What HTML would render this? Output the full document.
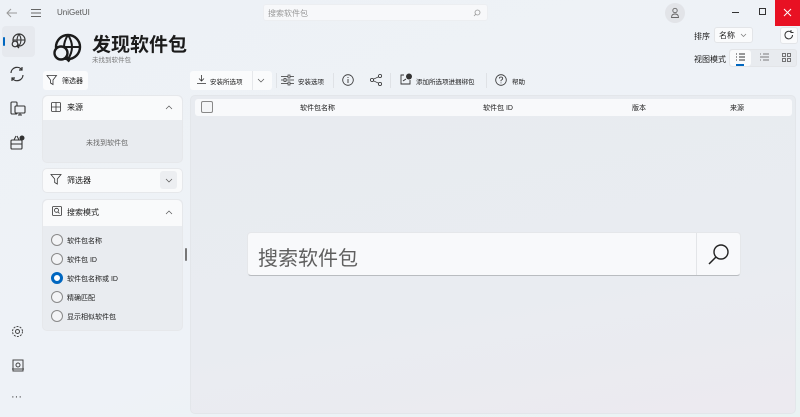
<!DOCTYPE html>
<html><head><meta charset="utf-8"><style>
*{margin:0;padding:0;box-sizing:border-box}
body{width:800px;height:417px;overflow:hidden;position:relative;font-family:"Liberation Sans","Noto Sans CJK SC",sans-serif;color:#1b1b1b;background:linear-gradient(160deg,#edf1f6 0%,#eef2f7 60%,#eaf3f3 100%)}
.a{position:absolute}
.t{font-size:8px;white-space:nowrap}
.card{position:absolute;background:#f9fafb;border:1px solid #e6e8eb;border-radius:5px}
.radio{position:absolute;left:51px;width:12px;height:12px;border:1px solid #8a8a8a;border-radius:50%;background:#f3f4f6}
svg{position:absolute;overflow:visible}
</style></head><body>
<svg style="left:6px;top:8px" width="12" height="10"><path d="M11 5H1M5 1L1 5L5 9" stroke="#999" fill="none" stroke-width="1"/></svg>
<svg style="left:31px;top:8px" width="11" height="10"><path d="M0 1.5H10M0 5H10M0 8.5H10" stroke="#666" stroke-width="1"/></svg>
<div class="a t" style="left:57px;top:8px;font-size:8px;color:#555">UniGetUI</div>
<div class="a" style="left:263px;top:4px;width:225px;height:17px;background:#f7f8fa;border-radius:3px;border:1px solid #eceef1"></div>
<div class="a t" style="left:268px;top:8px;color:#999">搜索软件包</div>
<svg style="left:473px;top:9px" width="8" height="8"><circle cx="4.5" cy="3.5" r="2.5" stroke="#999" fill="none" stroke-width=".8"/><path d="M2.8 5.2L1 7" stroke="#999" stroke-width=".8"/></svg>
<div class="a" style="left:665px;top:3px;width:20px;height:20px;border-radius:50%;background:#e2e4e8"></div>
<svg style="left:670px;top:7px" width="10" height="12"><circle cx="5" cy="3.5" r="2.2" stroke="#666" fill="none" stroke-width=".9"/><path d="M1.5 10.5Q1.5 7 5 7Q8.5 7 8.5 10.5Z" stroke="#666" fill="none" stroke-width=".9"/></svg>
<div class="a" style="left:732px;top:12px;width:7px;height:1px;background:#333"></div>
<div class="a" style="left:759px;top:8px;width:7px;height:7px;border:1px solid #333"></div>
<div class="a" style="left:775px;top:0;width:25px;height:26px;background:#e81123"></div>
<svg style="left:784px;top:9px" width="7" height="7"><path d="M0 0L7 7M7 0L0 7" stroke="#fff" stroke-width="1"/></svg>
<div class="a" style="left:2px;top:26px;width:33px;height:31px;background:#e6e9ee;border-radius:4px"></div>
<div class="a" style="left:3px;top:37px;width:2px;height:9px;background:#0067c0;border-radius:1px"></div>
<svg style="left:10px;top:33px" width="16" height="16"><circle cx="9" cy="7" r="6" stroke="#333" fill="none" stroke-width="1.2"/><path d="M3 7H15M9 1Q5 7 9 13M9 1Q13 7 9 13" stroke="#333" fill="none" stroke-width="1"/><circle cx="5" cy="11" r="2.8" fill="#e6e9ee" stroke="#333" stroke-width="1.2"/><path d="M7 13L9 15" stroke="#333" stroke-width="1.3"/></svg>
<svg style="left:9px;top:66px" width="16" height="16"><path d="M2 7A6 6 0 0 1 13 4M14 9A6 6 0 0 1 3 12M13 1V4H10M3 15V12H6" stroke="#333" fill="none" stroke-width="1.2"/></svg>
<svg style="left:10px;top:101px" width="16" height="15"><rect x="1" y="1" width="6" height="12" rx="1" stroke="#333" fill="none" stroke-width="1.1"/><rect x="5" y="5" width="10" height="7" rx="1" fill="#eef1f5" stroke="#333" stroke-width="1.1"/><path d="M8 14H12M10 12V14" stroke="#333"/></svg>
<svg style="left:9px;top:134px" width="17" height="17"><rect x="2" y="6" width="11" height="9" rx="1" stroke="#333" fill="none" stroke-width="1.1"/><path d="M5 6L7 2M10 6L8 2M2 10H13" stroke="#333" fill="none"/><circle cx="13" cy="4" r="2.5" fill="#333"/></svg>
<svg style="left:11px;top:325px" width="13" height="13"><circle cx="6.5" cy="6.5" r="2" stroke="#444" fill="none"/><circle cx="6.5" cy="6.5" r="5" stroke="#444" fill="none" stroke-dasharray="2 1.2"/></svg>
<svg style="left:12px;top:359px" width="12" height="13"><rect x="1" y="1" width="10" height="11" stroke="#444" fill="none"/><circle cx="6" cy="6" r="2" stroke="#444" fill="none"/><path d="M0 10H12" stroke="#444"/></svg>
<div class="a t" style="left:11px;top:391px;font-size:11px;color:#444">···</div>
<svg style="left:51px;top:33px" width="30" height="30"><circle cx="17" cy="14" r="12" stroke="#1b1b1b" fill="none" stroke-width="2.4"/><path d="M5 14H29M17 2Q9 14 17 26M17 2Q25 14 17 26" stroke="#1b1b1b" fill="none" stroke-width="2"/><circle cx="10" cy="20" r="6.5" fill="#eef2f6" stroke="#1b1b1b" stroke-width="2.4"/><path d="M14.5 24.5L18.5 28.5" stroke="#1b1b1b" stroke-width="2.6"/></svg>
<div class="a" style="left:92px;top:30px;font-size:19px;font-weight:bold;white-space:nowrap">发现软件包</div>
<div class="a t" style="left:92px;top:54px;font-size:6.5px;color:#777">未找到软件包</div>
<div class="a t" style="left:694px;top:31px">排序</div>
<div class="a" style="left:714px;top:27px;width:39px;height:16px;background:#fafbfc;border:1px solid #e3e5e8;border-radius:3px"></div>
<div class="a t" style="left:719px;top:30px">名称</div>
<svg style="left:741px;top:34px" width="5" height="3"><path d="M0 0L2.5 2.5L5 0" stroke="#777" fill="none" stroke-width=".7"/></svg>
<div class="a" style="left:780px;top:27px;width:18px;height:17px;background:#fafbfc;border:1px solid #e3e5e8;border-radius:3px"></div>
<svg style="left:784px;top:30px" width="10" height="10"><path d="M8.5 5A3.8 3.8 0 1 1 7 2M7 0V2.5H9.5" stroke="#333" fill="none"/></svg>
<div class="a t" style="left:694px;top:54px">视图模式</div>
<div class="a" style="left:729px;top:49px;width:68px;height:18px;background:#e8ebef;border:1px solid #e3e5e8;border-radius:3px"></div>
<div class="a" style="left:730px;top:50px;width:21px;height:16px;background:#fafbfc;border-radius:3px"></div>
<div class="a" style="left:736px;top:64px;width:8px;height:2px;background:#0067c0"></div>
<svg style="left:736px;top:53px" width="9" height="8"><path d="M0 1H1M3 1H9M0 4H1M3 4H9M0 7H1M3 7H9" stroke="#333"/></svg>
<svg style="left:760px;top:53px" width="9" height="8"><path d="M0 1H1M3 1H9M0 4H9M0 7H1M3 7H9" stroke="#555" stroke-width=".8"/></svg>
<svg style="left:782px;top:53px" width="9" height="9"><rect x=".5" y=".5" width="3" height="3" stroke="#555" fill="none" stroke-width=".8"/><rect x="5.5" y=".5" width="3" height="3" stroke="#555" fill="none" stroke-width=".8"/><rect x=".5" y="5.5" width="3" height="3" stroke="#555" fill="none" stroke-width=".8"/><rect x="5.5" y="5.5" width="3" height="3" stroke="#555" fill="none" stroke-width=".8"/></svg>
<div class="a" style="left:43px;top:71px;width:45px;height:19px;background:#fafbfc;border-radius:3px"></div>
<svg style="left:47px;top:75px" width="10" height="10"><path d="M0 .5H9.5L6 5V9.5L3.5 8V5Z" stroke="#333" fill="none" stroke-width=".8"/></svg>
<div class="a t" style="left:62px;top:76px;font-size:7px">筛选器</div>
<div class="a" style="left:190px;top:71px;width:82px;height:19px;background:#fafbfc;border-radius:3px"></div>
<div class="a" style="left:252px;top:71px;width:1px;height:19px;background:#e6e8eb"></div>
<svg style="left:197px;top:75px" width="9" height="9"><path d="M4.5 0V6M2 3.5L4.5 6L7 3.5M0 8.5H9" stroke="#333" fill="none" stroke-width=".8"/></svg>
<div class="a t" style="left:210px;top:76px;font-size:6.5px">安装所选项</div>
<svg style="left:258px;top:79px" width="6" height="3"><path d="M0 0L3 3L6 0" stroke="#555" fill="none" stroke-width=".7"/></svg>
<div class="a" style="left:276px;top:73px;width:1px;height:15px;background:#dfe2e6"></div>
<svg style="left:281px;top:75px" width="13" height="10"><path d="M0 1.5H13M0 5H13M0 8.5H13" stroke="#333" stroke-width=".8"/><rect x="7" y="0" width="2" height="3" fill="#eef1f5" stroke="#333" stroke-width=".7"/><rect x="3" y="3.5" width="2" height="3" fill="#eef1f5" stroke="#333" stroke-width=".7"/><rect x="7" y="7" width="2" height="3" fill="#eef1f5" stroke="#333" stroke-width=".7"/></svg>
<div class="a t" style="left:298px;top:76px;font-size:6.5px">安装选项</div>
<div class="a" style="left:333px;top:73px;width:1px;height:15px;background:#dfe2e6"></div>
<svg style="left:342px;top:74px" width="12" height="12"><circle cx="6" cy="6" r="5.3" stroke="#333" fill="none" stroke-width=".8"/><path d="M6 5V9M6 3V4" stroke="#333" stroke-width=".9"/></svg>
<svg style="left:370px;top:74px" width="12" height="12"><circle cx="2" cy="6" r="1.6" stroke="#333" fill="none" stroke-width=".8"/><circle cx="10" cy="2" r="1.6" stroke="#333" fill="none" stroke-width=".8"/><circle cx="10" cy="10" r="1.6" stroke="#333" fill="none" stroke-width=".8"/><path d="M3.5 5.2L8.5 2.8M3.5 6.8L8.5 9.2" stroke="#333" stroke-width=".8"/></svg>
<div class="a" style="left:390px;top:73px;width:1px;height:15px;background:#dfe2e6"></div>
<svg style="left:400px;top:73px" width="12" height="12"><path d="M4 2H1V11H10V7" stroke="#333" fill="none" stroke-width=".9"/><circle cx="9" cy="3.5" r="3" fill="#333"/><path d="M3 8L6 6" stroke="#333"/></svg>
<div class="a t" style="left:416px;top:76px;font-size:6.5px">添加所选项进捆绑包</div>
<div class="a" style="left:486px;top:73px;width:1px;height:15px;background:#dfe2e6"></div>
<svg style="left:495px;top:74px" width="12" height="12"><circle cx="6" cy="6" r="5.3" stroke="#333" fill="none" stroke-width=".8"/><path d="M4.3 4.5Q4.3 3 6 3Q7.7 3 7.7 4.5Q7.7 5.5 6 6.3V7.3M6 8.5V9.3" stroke="#333" fill="none" stroke-width=".8"/></svg>
<div class="a t" style="left:512px;top:76px;font-size:6.5px">帮助</div>
<div class="card" style="left:42px;top:95px;width:141px;height:68px;background:#e9ecf0">
<div style="position:absolute;left:0;top:0;right:0;height:24px;background:#f9fafb;border-radius:5px 5px 0 0"></div></div>
<svg style="left:51px;top:102px" width="10" height="10"><rect x=".5" y=".5" width="9" height="9" rx="1" stroke="#333" fill="none" stroke-width=".8"/><path d="M5 .5V9.5M.5 5H9.5" stroke="#333" stroke-width=".8"/></svg>
<div class="a t" style="left:67px;top:102px">来源</div>
<svg style="left:166px;top:106px" width="6" height="3"><path d="M0 3L3 0L6 3" stroke="#555" fill="none" stroke-width=".7"/></svg>
<div class="a t" style="left:86px;top:138px;font-size:7px;color:#666">未找到软件包</div>
<div class="card" style="left:42px;top:168px;width:141px;height:25px"></div>
<svg style="left:51px;top:174px" width="10" height="11"><path d="M0 .5H10L6.3 5V10L3.7 8.5V5Z" stroke="#333" fill="none" stroke-width=".8"/></svg>
<div class="a t" style="left:67px;top:175px">筛选器</div>
<div class="a" style="left:160px;top:171px;width:17px;height:18px;background:#eceef1;border-radius:3px"></div>
<svg style="left:166px;top:179px" width="6" height="3"><path d="M0 0L3 3L6 0" stroke="#555" fill="none" stroke-width=".7"/></svg>
<div class="card" style="left:42px;top:199px;width:141px;height:132px;background:#e9ecf0">
<div style="position:absolute;left:0;top:0;right:0;height:26px;background:#f9fafb;border-radius:5px 5px 0 0"></div></div>
<svg style="left:52px;top:206px" width="10" height="10"><rect x=".5" y=".5" width="9" height="9" rx="1" stroke="#333" fill="none" stroke-width=".8"/><circle cx="4.5" cy="4.3" r="2" stroke="#333" fill="none" stroke-width=".8"/><path d="M6 6L7.5 7.5" stroke="#333" stroke-width=".8"/></svg>
<div class="a t" style="left:67px;top:207px">搜索模式</div>
<svg style="left:166px;top:211px" width="6" height="3"><path d="M0 3L3 0L6 3" stroke="#555" fill="none" stroke-width=".7"/></svg>
<div class="radio" style="top:234px"></div><div class="a t" style="left:67px;top:236px;font-size:7px">软件包名称</div>
<div class="radio" style="top:253px"></div><div class="a t" style="left:67px;top:255px;font-size:7px">软件包 ID</div>
<div class="radio" style="top:272px;border:3.5px solid #0067c0;background:#fff"></div><div class="a t" style="left:67px;top:274px;font-size:7px">软件包名称或 ID</div>
<div class="radio" style="top:291px"></div><div class="a t" style="left:67px;top:293px;font-size:7px">精确匹配</div>
<div class="radio" style="top:310px"></div><div class="a t" style="left:67px;top:312px;font-size:7px">显示相似软件包</div>
<div class="a" style="left:185px;top:248px;width:2px;height:13px;background:#777;border-radius:1px"></div>
<div class="a" style="left:190px;top:95px;width:606px;height:319px;background:linear-gradient(170deg,#e8ebf0 0%,#e9ecf1 60%,#eceaf0 100%);border:1px solid #e3e6ea;border-radius:5px"></div>
<div class="a" style="left:195px;top:99px;width:597px;height:17px;background:#f8f9fb;border-radius:3px"></div>
<div class="a" style="left:201px;top:101px;width:12px;height:12px;border:1px solid #888;border-radius:2px;background:#f4f5f7"></div>
<div class="a t" style="left:300px;top:103px;font-size:7px">软件包名称</div>
<div class="a t" style="left:483px;top:103px;font-size:7px">软件包 ID</div>
<div class="a t" style="left:632px;top:103px;font-size:7px">版本</div>
<div class="a t" style="left:730px;top:103px;font-size:7px">来源</div>
<div class="a" style="left:247px;top:232px;width:494px;height:44px;background:#f8f9fb;border:1px solid #e5e7ea;border-bottom:1px solid #b9bcc0;border-radius:4px"></div>
<div class="a" style="left:696px;top:233px;width:1px;height:42px;background:#e3e5e8"></div>
<div class="a" style="left:258px;top:242px;font-size:20px;color:#5f5f5f;white-space:nowrap">搜索软件包</div>
<svg style="left:707px;top:243px" width="24" height="22"><circle cx="14" cy="9" r="7" stroke="#222" fill="none" stroke-width="1.4"/><path d="M9 14L2 21" stroke="#222" stroke-width="1.5"/></svg>
</body></html>
